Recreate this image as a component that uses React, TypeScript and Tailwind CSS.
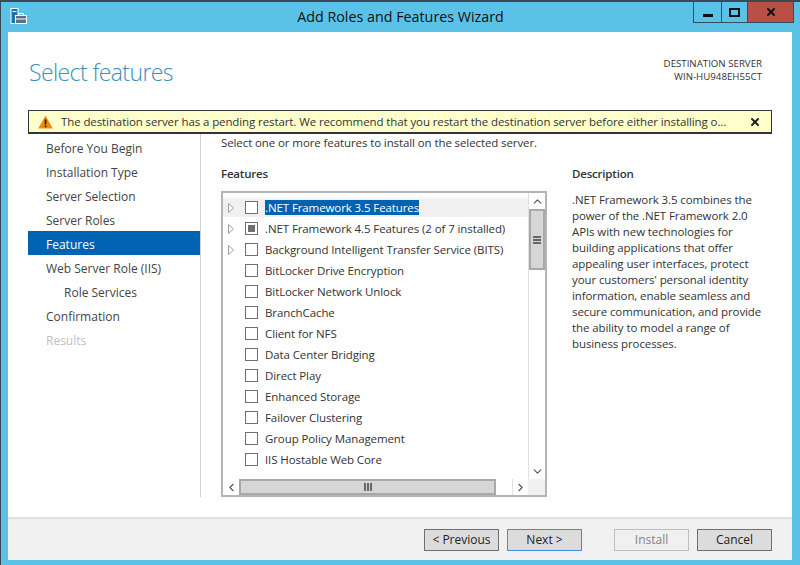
import { ChevronUp, ChevronDown, ChevronLeft, ChevronRight, X } from 'lucide-react'

const steps = [
  { name: 'Before You Begin' },
  { name: 'Installation Type' },
  { name: 'Server Selection' },
  { name: 'Server Roles' },
  { name: 'Features', active: true },
  { name: 'Web Server Role (IIS)' },
  { name: 'Role Services', indent: true },
  { name: 'Confirmation' },
  { name: 'Results', disabled: true },
]

const features = [
  { name: '.NET Framework 3.5 Features', expand: true, selected: true },
  { name: '.NET Framework 4.5 Features (2 of 7 installed)', expand: true, partial: true },
  { name: 'Background Intelligent Transfer Service (BITS)', expand: true },
  { name: 'BitLocker Drive Encryption' },
  { name: 'BitLocker Network Unlock' },
  { name: 'BranchCache' },
  { name: 'Client for NFS' },
  { name: 'Data Center Bridging' },
  { name: 'Direct Play' },
  { name: 'Enhanced Storage' },
  { name: 'Failover Clustering' },
  { name: 'Group Policy Management' },
  { name: 'IIS Hostable Web Core' },
]

function AppIcon() {
  return (
    <svg width="17" height="17" viewBox="0 0 17 17">
      <rect x="1" y="0.5" width="7" height="15" fill="#1f6fb5" stroke="#fff" />
      <rect x="2.5" y="3" width="4" height="1" fill="#fff" />
      <rect x="5.5" y="7.5" width="11" height="8" fill="#5c6f80" stroke="#fff" />
      <path d="M8.5 7.5V5.5h5v2" fill="none" stroke="#fff" />
      <rect x="6" y="10.5" width="10" height="1" fill="#fff" />
    </svg>
  )
}

function WarningIcon() {
  return (
    <svg width="15" height="14" viewBox="0 0 15 14">
      <path d="M7.5 0.5L14.8 13.5H0.2Z" fill="#f08a12" />
      <rect x="6.7" y="4.5" width="1.7" height="5" fill="#2b1a00" />
      <rect x="6.7" y="10.5" width="1.7" height="1.7" fill="#2b1a00" />
    </svg>
  )
}

function WizardButton({ label, focused, disabled }: { label: string; focused?: boolean; disabled?: boolean }) {
  return (
    <button
      className={
        disabled
          ? 'h-[22px] w-[75px] border border-[#bfbfbf] bg-[#f0f0f0] text-[12px] text-[#838383]'
          : focused
            ? 'h-[22px] w-[75px] border border-[#3c8fe0] bg-[#dcdcdc] text-[12px] text-[#222]'
            : 'h-[22px] w-[75px] border border-[#707070] bg-[#dcdcdc] text-[12px] text-[#222]'
      }
    >
      {label}
    </button>
  )
}

export default function App() {
  return (
    <div className="flex h-[565px] w-[800px] flex-col overflow-hidden border-l border-[#3b4a52] bg-[#5bc2e7] font-['Open_Sans',sans-serif] text-[#333]">
      {/* Title bar */}
      <div className="grid h-[32px] shrink-0 grid-cols-[1fr_auto_1fr] border-t-2 border-[#3b4a52]">
        <div className="pl-[9px] pt-[6px]">
          <AppIcon />
        </div>
        <div className="pt-[5px] text-[14.3px] leading-[20px] text-[#111]">Add Roles and Features Wizard</div>
        <div className="flex justify-end pr-[6px]">
          <div className="flex h-[21px] border border-t-0 border-[#2f4f5f]">
            <div className="flex w-[27px] items-end justify-center pb-[5px]">
              <div className="h-[3px] w-[10px] bg-[#111]" />
            </div>
            <div className="flex w-[26px] items-center justify-center border-l border-[#2f4f5f]">
              <div className="h-[9px] w-[11px] border-2 border-[#111]" />
            </div>
            <div className="flex w-[46px] items-center justify-center border-l border-[#2f4f5f] bg-[#b85048]">
              <X size={12} strokeWidth={4} color="#111" />
            </div>
          </div>
        </div>
      </div>

      {/* Window content */}
      <div className="ml-[7px] flex h-[528px] w-[784px] shrink-0 flex-col bg-white">
        <div className="flex h-[78px] shrink-0 justify-between pl-[21px] pr-[30px]">
          <h1 className="pt-[23px] text-[23px] font-light leading-[34px] tracking-[-0.6px] text-[#3b8fb8]">Select features</h1>
          <div className="pt-[25px] text-right text-[9.7px] leading-[13px] text-[#333]">
            <div>DESTINATION SERVER</div>
            <div>WIN-HU948EH55CT</div>
          </div>
        </div>

        {/* Pending restart warning */}
        <div className="mx-[20px] flex h-[24px] shrink-0 items-center border border-b-2 border-[#333] bg-[#ffffcc] pl-[9px] pr-[10px]">
          <WarningIcon />
          <span className="ml-[8px] flex-1 whitespace-nowrap text-[11.5px] tracking-[-0.1px] text-[#333]">
            The destination server has a pending restart. We recommend that you restart the destination server before either installing o...
          </span>
          <X size={12} strokeWidth={4} color="#222" />
        </div>

        <div className="flex h-[363px] shrink-0 pl-[20px]">
          {/* Steps */}
          <nav className="h-full w-[173px] shrink-0 border-r border-[#d0d0d0] pt-[1px]">
            {steps.map((step) => (
              <div
                key={step.name}
                className={
                  step.active
                    ? 'h-[24px] bg-[#0063b1] pl-[18px] text-[12px] leading-[28px] text-white'
                    : step.disabled
                      ? 'h-[24px] pl-[18px] text-[12px] leading-[28px] text-[#c0c0c0]'
                      : step.indent
                        ? 'h-[24px] pl-[36px] text-[12px] leading-[28px] text-[#444]'
                        : 'h-[24px] pl-[18px] text-[12px] leading-[28px] text-[#444]'
                }
              >
                {step.name}
              </div>
            ))}
          </nav>

          <div className="min-w-0 flex-1 pt-[1px]">
            <p className="-mt-[1px] pl-[20px] text-[11.5px] leading-[18px] tracking-[-0.1px] text-[#333]">
              Select one or more features to install on the selected server.
            </p>
            <div className="flex pl-[20px] pt-[13px]">
              <div className="w-[326px] shrink-0">
                <h2 className="text-[11.5px] font-semibold leading-[18px] tracking-[-0.2px] text-[#333]">Features</h2>
                <div className="mt-[8px] flex h-[306px] flex-col border-2 border-[#b4b4b4]">
                  <div className="flex min-h-0 flex-1">
                    <div className="min-w-0 flex-1 pt-[4px]">
                      {features.map((feature) => (
                        <div key={feature.name} className="flex h-[21px] items-center">
                          <div
                            className={
                              feature.selected
                                ? 'flex h-[19px] min-w-0 flex-1 items-center bg-[#f0f0f0]'
                                : 'flex h-[19px] min-w-0 flex-1 items-center'
                            }
                          >
                            <div className="flex w-[22px] shrink-0 justify-center pr-[6px]">
                              {feature.expand && (
                                <svg width="6" height="10" viewBox="0 0 6 10">
                                  <path d="M0.5 0.5L5.5 5L0.5 9.5Z" fill="#fff" stroke="#a0a0a0" />
                                </svg>
                              )}
                            </div>
                            <div className="flex h-[13px] w-[13px] shrink-0 items-center justify-center border border-[#707070] bg-white">
                              {feature.partial && <div className="h-[7px] w-[7px] bg-[#707070]" />}
                            </div>
                            <span
                              className={
                                feature.selected
                                  ? 'ml-[7px] whitespace-nowrap bg-[#0063b1] text-[11.5px] leading-[15px] tracking-[-0.1px] text-white'
                                  : 'ml-[7px] whitespace-nowrap text-[11.5px] leading-[15px] tracking-[-0.1px] text-[#333]'
                              }
                            >
                              {feature.name}
                            </span>
                          </div>
                        </div>
                      ))}
                    </div>
                    {/* Vertical scrollbar */}
                    <div className="flex w-[17px] shrink-0 flex-col border-l border-[#e0e0e0]">
                      <div className="flex h-[16px] shrink-0 items-center justify-center">
                        <ChevronUp size={13} color="#555" />
                      </div>
                      <div className="flex h-[61px] shrink-0 items-center justify-center border-2 border-[#a8a8a8] bg-[#d6d6d6]">
                        <div className="h-[8px] w-[8px] border-y-2 border-[#666] bg-[linear-gradient(#666_0_0)] bg-[length:100%_2px] bg-center bg-no-repeat" />
                      </div>
                      <div className="flex-1" />
                      <div className="flex h-[16px] shrink-0 items-center justify-center">
                        <ChevronDown size={13} color="#555" />
                      </div>
                    </div>
                  </div>
                  {/* Horizontal scrollbar */}
                  <div className="flex h-[16px] shrink-0">
                    <div className="flex w-[16px] items-center justify-center">
                      <ChevronLeft size={13} color="#555" />
                    </div>
                    <div className="flex w-[257px] items-center justify-center border-2 border-[#a8a8a8] bg-[#d6d6d6]">
                      <div className="h-[8px] w-[8px] border-x-2 border-[#666] bg-[linear-gradient(#666_0_0)] bg-[length:2px_100%] bg-center bg-no-repeat" />
                    </div>
                    <div className="flex-1" />
                    <div className="flex w-[16px] items-center justify-center border-l border-[#e0e0e0]">
                      <ChevronRight size={13} color="#555" />
                    </div>
                    <div className="w-[17px] bg-[#f0f0f0]" />
                  </div>
                </div>
              </div>
              <div className="ml-[25px] w-[195px] shrink-0">
                <h2 className="text-[11.5px] font-semibold leading-[18px] tracking-[-0.2px] text-[#333]">Description</h2>
                <p className="mt-[9px] text-[11.5px] leading-[16px] tracking-[-0.1px] text-[#333]">
                  .NET Framework 3.5 combines the power of the .NET Framework 2.0 APIs with new technologies for building applications that offer appealing user interfaces, protect your customers' personal identity information, enable seamless and secure communication, and provide the ability to model a range of business processes.
                </p>
              </div>
            </div>
          </div>
        </div>

        {/* Footer */}
        <div className="mt-auto flex h-[43px] shrink-0 items-center justify-end gap-[8px] border-t-2 border-[#e0e0e0] bg-[#f0f0f0] pr-[20px]">
          <WizardButton label="< Previous" />
          <WizardButton label="Next >" focused />
          <div className="w-[16px]" />
          <WizardButton label="Install" disabled />
          <WizardButton label="Cancel" />
        </div>
      </div>
    </div>
  )
}
